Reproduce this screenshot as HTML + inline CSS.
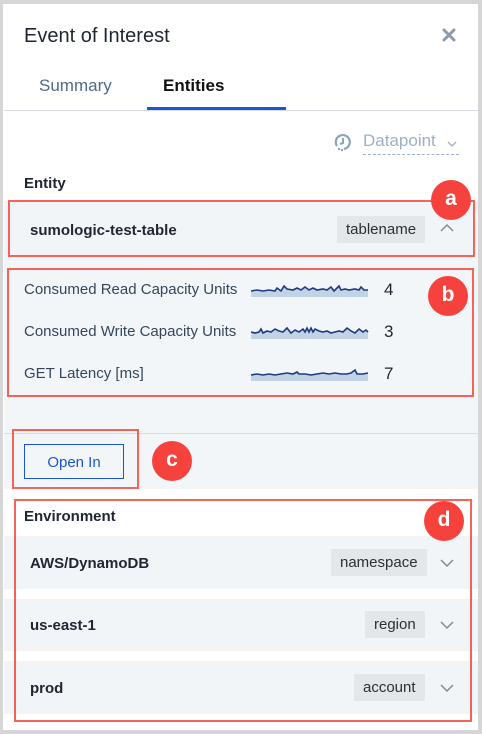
<!DOCTYPE html>
<html><head><meta charset="utf-8"><style>
*{margin:0;padding:0;box-sizing:border-box}
body{width:482px;height:734px;background:#d6d6d6;font-family:"Liberation Sans",sans-serif;position:relative;overflow:hidden}
.panel{position:absolute;left:3px;top:4px;width:475px;height:726px;background:#fff}
.a{position:absolute}
.t{position:absolute;white-space:nowrap}
.rb{position:absolute;border:2px solid #f56257}
.badge{position:absolute;width:40px;height:40px;border-radius:50%;background:#f5423c;color:#fff;font-weight:bold;font-size:21px;text-align:center;line-height:38px}
.chip{position:absolute;height:27px;background:#e3e7ea;color:#2b2f36;font-size:15px;line-height:28px;padding:0 9px}
.row{position:absolute;left:4px;width:474px;background:#f2f5f8}
.sp path.f{fill:#c2d3e6}
.sp path.l{fill:none;stroke:#1d3a80;stroke-width:1.6}
</style></head><body>
<div class="panel"></div>
<div class="t" style="left:24px;top:25px;font-size:20px;color:#1f2533">Event of Interest</div>
<svg class="a" style="left:442px;top:28px" width="14" height="14"><path d="M2 2L12 12M12 2L2 12" stroke="#8a9bab" stroke-width="3" stroke-linecap="round"/></svg>
<div class="t" style="left:39px;top:76px;font-size:17px;color:#4d6a87">Summary</div>
<div class="t" style="left:163px;top:76px;font-size:17px;color:#111;font-weight:bold">Entities</div>
<div class="a" style="left:4px;top:110px;width:474px;height:1px;background:#d8dde3"></div>
<div class="a" style="left:147px;top:107px;width:139px;height:3px;background:#1a55d6"></div>
<svg class="a" style="left:333px;top:132px" width="20" height="20"><path d="M4 14A7 7 0 1 1 11 17" fill="none" stroke="#8fa3b8" stroke-width="2.2"/><path d="M10 6V11L7 12" fill="none" stroke="#8fa3b8" stroke-width="2"/><circle cx="6" cy="17" r="1.2" fill="#8fa3b8"/><circle cx="9" cy="18" r="1.2" fill="#8fa3b8"/></svg>
<div class="t" style="left:363px;top:131px;font-size:17px;color:#9db0c4">Datapoint</div>
<svg class="a" style="left:446px;top:140px" width="12" height="8"><path d="M2 2L6 6L10 2" fill="none" stroke="#9db0c4" stroke-width="1.3"/></svg>
<div class="a" style="left:363px;top:154px;width:96px;border-top:1px dashed #9db0c4"></div>
<div class="t" style="left:24px;top:175px;font-size:15px;color:#1f2533;font-weight:bold">Entity</div>
<div class="a" style="left:4px;top:201px;width:474px;height:232px;background:#f3f6f9"></div>
<div class="row" style="top:202px;height:53px"></div>
<div class="t" style="left:30px;top:222px;font-size:15px;color:#1f2533;font-weight:bold">sumologic-test-table</div>
<div class="chip" style="left:337px;top:216px">tablename</div>
<svg class="a" style="left:439px;top:223px" width="16" height="10"><path d="M2 8L8 2L14 8" fill="none" stroke="#7d8c9b" stroke-width="1.5"/></svg>
<div class="rb" style="left:8px;top:200px;width:467px;height:57px"></div>
<div class="t" style="left:24px;top:281px;font-size:15px;color:#33475b">Consumed Read Capacity Units</div>
<div class="t" style="left:24px;top:323px;font-size:15px;color:#33475b">Consumed Write Capacity Units</div>
<div class="t" style="left:24px;top:365px;font-size:15px;color:#33475b">GET Latency [ms]</div>
<svg class="a sp" style="left:251px;top:284px" width="118" height="14"><path class="f" d="M0 7L6 6L12 7L18 6L24 7L26 4L30 7L33 2L36 5L42 6L46 4L50 6L54 3L58 6L62 4L66 6L72 5L76 6L80 3L83 7L86 4L88 2L90 6L94 5L98 6L104 5L108 6L110 3L113 6L117 6V13H0Z"/><path class="l" d="M0 7L6 6L12 7L18 6L24 7L26 4L30 7L33 2L36 5L42 6L46 4L50 6L54 3L58 6L62 4L66 6L72 5L76 6L80 3L83 7L86 4L88 2L90 6L94 5L98 6L104 5L108 6L110 3L113 6L117 6"/></svg>
<svg class="a sp" style="left:251px;top:326px" width="118" height="14"><path class="f" d="M0 6L4 7L8 6L10 3L12 7L16 5L20 6L24 3L28 5L32 6L36 2L40 7L44 4L48 6L52 3L54 6L56 2L58 6L60 2L62 6L64 3L68 5L72 6L76 5L80 7L84 6L88 5L92 6L96 2L100 5L104 7L108 3L112 6L115 4L117 6V13H0Z"/><path class="l" d="M0 6L4 7L8 6L10 3L12 7L16 5L20 6L24 3L28 5L32 6L36 2L40 7L44 4L48 6L52 3L54 6L56 2L58 6L60 2L62 6L64 3L68 5L72 6L76 5L80 7L84 6L88 5L92 6L96 2L100 5L104 7L108 3L112 6L115 4L117 6"/></svg>
<svg class="a sp" style="left:251px;top:368px" width="118" height="14"><path class="f" d="M0 7L6 6L12 7L18 6L24 7L30 6L36 5L42 6L46 4L48 6L54 6L60 7L66 6L72 5L78 6L84 5L90 6L96 6L100 5L104 2L106 6L112 6L117 5V13H0Z"/><path class="l" d="M0 7L6 6L12 7L18 6L24 7L30 6L36 5L42 6L46 4L48 6L54 6L60 7L66 6L72 5L78 6L84 5L90 6L96 6L100 5L104 2L106 6L112 6L117 5"/></svg>
<div class="t" style="left:384px;top:280px;font-size:17px;color:#1f2533">4</div>
<div class="t" style="left:384px;top:322px;font-size:17px;color:#1f2533">3</div>
<div class="t" style="left:384px;top:364px;font-size:17px;color:#1f2533">7</div>
<div class="rb" style="left:7px;top:268px;width:467px;height:129px"></div>
<div class="a" style="left:4px;top:433px;width:474px;height:56px;background:#f3f6f9;border-top:1px solid #d8dde3"></div>
<div class="a" style="left:24px;top:444px;width:100px;height:35px;border:1px solid #1a55d6;color:#1a55d6;font-size:15px;text-align:center;line-height:35px">Open In</div>
<div class="rb" style="left:12px;top:429px;width:127px;height:60px"></div>
<div class="t" style="left:24px;top:508px;font-size:15px;color:#1f2533;font-weight:bold">Environment</div>
<div class="row" style="top:536px;height:53px"></div>
<div class="row" style="top:599px;height:52px"></div>
<div class="row" style="top:661px;height:53px"></div>
<div class="t" style="left:30px;top:555px;font-size:15px;color:#1f2533;font-weight:bold">AWS/DynamoDB</div>
<div class="t" style="left:30px;top:617px;font-size:15px;color:#1f2533;font-weight:bold">us-east-1</div>
<div class="t" style="left:30px;top:680px;font-size:15px;color:#1f2533;font-weight:bold">prod</div>
<div class="chip" style="left:331px;top:549px">namespace</div>
<div class="chip" style="left:365px;top:611px">region</div>
<div class="chip" style="left:354px;top:674px">account</div>
<svg class="a" style="left:439px;top:558px" width="16" height="10"><path d="M2 2L8 8L14 2" fill="none" stroke="#7d8c9b" stroke-width="1.5"/></svg>
<svg class="a" style="left:439px;top:620px" width="16" height="10"><path d="M2 2L8 8L14 2" fill="none" stroke="#7d8c9b" stroke-width="1.5"/></svg>
<svg class="a" style="left:439px;top:683px" width="16" height="10"><path d="M2 2L8 8L14 2" fill="none" stroke="#7d8c9b" stroke-width="1.5"/></svg>
<div class="rb" style="left:14px;top:499px;width:458px;height:223px"></div>
<div class="badge" style="left:431px;top:180px">a</div>
<div class="badge" style="left:428px;top:276px">b</div>
<div class="badge" style="left:152px;top:441px">c</div>
<div class="badge" style="left:424px;top:501px">d</div>
</body></html>
